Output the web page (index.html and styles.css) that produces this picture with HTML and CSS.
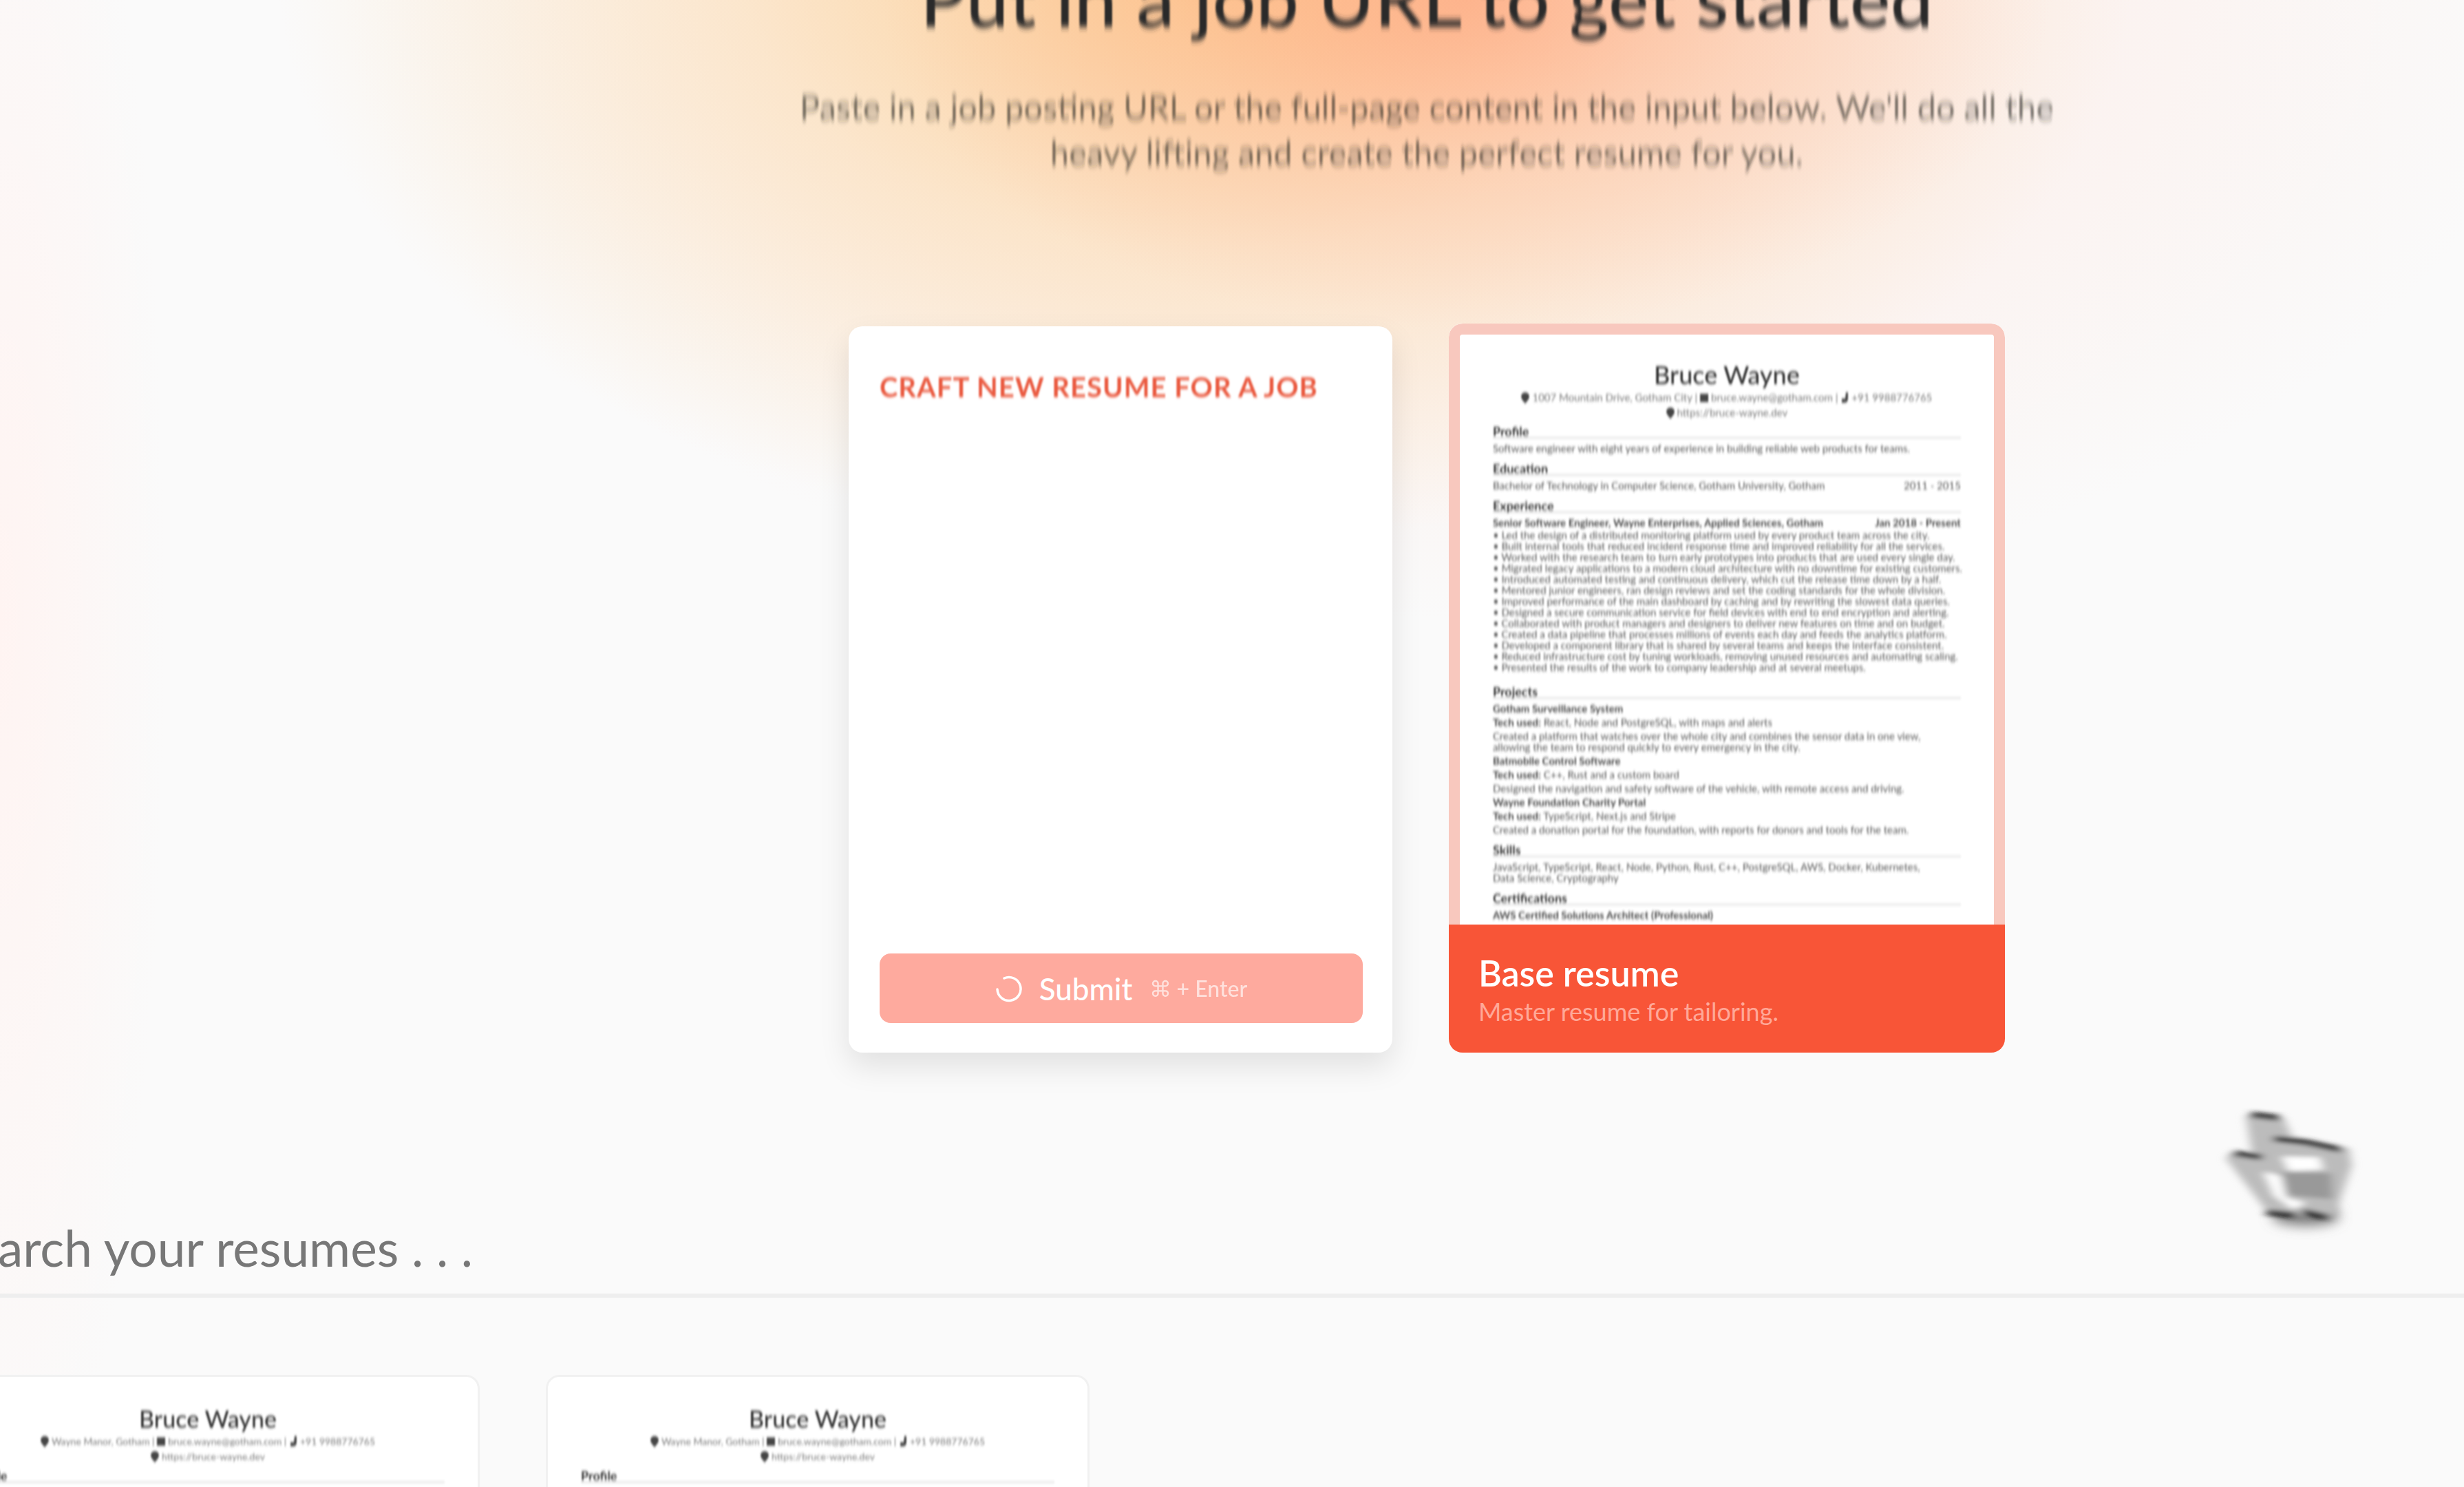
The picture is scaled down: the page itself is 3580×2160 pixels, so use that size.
FILE: index.html
```html
<!DOCTYPE html>
<html lang="en">
<head>
<meta charset="utf-8">
<title>Resumes</title>
<link rel="stylesheet" href="styles.css">
</head>
<body>
<svg class="defs" width="0" height="0" aria-hidden="true">
  <filter id="soft-tall" x="-5%" y="-20%" width="110%" height="140%"><feGaussianBlur stdDeviation="1 5"/></filter>
  <filter id="soft" x="-5%" y="-20%" width="110%" height="140%"><feGaussianBlur stdDeviation="1 2"/></filter>
  <symbol id="pin" viewBox="0 0 12 16"><path d="M6 0a6 6 0 0 0-6 6c0 4 6 10 6 10s6-6 6-10a6 6 0 0 0-6-6z"/></symbol>
  <symbol id="mail" viewBox="0 0 12 16"><path d="M0 2h12v12H0z"/></symbol>
  <symbol id="phone" viewBox="0 0 12 16"><path d="M8 0h3v9q0 6-6 6H2V9h5z"/></symbol>
</svg>
<div class="page">
  <header class="hero">
    <h1>Put in a job URL to get started</h1>
    <p>Paste in a job posting URL or the full-page content in the input below. We'll do all the<br>heavy lifting and create the perfect resume for you.</p>
  </header>
  <main>
    <section class="start">
      <form class="card craft">
        <label for="job">Craft new resume for a job</label>
        <textarea id="job"></textarea>
        <button type="button">
          <svg class="spinner" viewBox="0 0 40 40" aria-hidden="true"><path d="M13 5a17 17 0 1 1-10 16" fill="none" stroke="currentColor" stroke-width="3.5" stroke-linecap="round"/></svg>
          <span>Submit</span><small>⌘ + Enter</small>
        </button>
      </form>
      <article class="card base">
        <div class="doc framed">
          <h2>Bruce Wayne</h2>
          <p class="contact"><svg><use href="#pin"/></svg>1007 Mountain Drive, Gotham City | <svg><use href="#mail"/></svg>bruce.wayne@gotham.com | <svg><use href="#phone"/></svg>+91 9988776765<br><svg><use href="#pin"/></svg>https://bruce-wayne.dev</p>
          <h3>Profile</h3>
          <p>Software engineer with eight years of experience in building reliable web products for teams.</p>
          <h3>Education</h3>
          <p class="split"><span>Bachelor of Technology in Computer Science, Gotham University, Gotham</span><span>2011 - 2015</span></p>
          <h3>Experience</h3>
          <p class="split"><b>Senior Software Engineer, Wayne Enterprises, Applied Sciences, Gotham</b><b>Jan 2018 - Present</b></p>
          <p class="points">• Led the design of a distributed monitoring platform used by every product team across the city.<br>• Built internal tools that reduced incident response time and improved reliability for all the services.<br>• Worked with the research team to turn early prototypes into products that are used every single day.<br>• Migrated legacy applications to a modern cloud architecture with no downtime for existing customers.<br>• Introduced automated testing and continuous delivery, which cut the release time down by a half.<br>• Mentored junior engineers, ran design reviews and set the coding standards for the whole division.<br>• Improved performance of the main dashboard by caching and by rewriting the slowest data queries.<br>• Designed a secure communication service for field devices with end to end encryption and alerting.<br>• Collaborated with product managers and designers to deliver new features on time and on budget.<br>• Created a data pipeline that processes millions of events each day and feeds the analytics platform.<br>• Developed a component library that is shared by several teams and keeps the interface consistent.<br>• Reduced infrastructure cost by tuning workloads, removing unused resources and automating scaling.<br>• Presented the results of the work to company leadership and at several meetups.</p>
          <h3>Projects</h3>
          <p class="item"><b>Gotham Surveillance System</b></p>
          <p class="item"><b>Tech used:</b> React, Node and PostgreSQL, with maps and alerts</p>
          <p class="item">Created a platform that watches over the whole city and combines the sensor data in one view,<br>allowing the team to respond quickly to every emergency in the city.</p>
          <p class="item"><b>Batmobile Control Software</b></p>
          <p class="item"><b>Tech used:</b> C++, Rust and a custom board</p>
          <p class="item">Designed the navigation and safety software of the vehicle, with remote access and driving.</p>
          <p class="item"><b>Wayne Foundation Charity Portal</b></p>
          <p class="item"><b>Tech used:</b> TypeScript, Next.js and Stripe</p>
          <p class="item">Created a donation portal for the foundation, with reports for donors and tools for the team.</p>
          <h3>Skills</h3>
          <p>JavaScript, TypeScript, React, Node, Python, Rust, C++, PostgreSQL, AWS, Docker, Kubernetes,<br>Data Science, Cryptography</p>
          <h3>Certifications</h3>
          <p><b>AWS Certified Solutions Architect (Professional)</b></p>
        </div>
        <footer>
          <strong>Base resume</strong>
          <span>Master resume for tailoring.</span>
        </footer>
      </article>
    </section>
    <input class="search" type="search" aria-label="Search your resumes" placeholder="Search your resumes . . .">
    <section class="list">
      <article class="card doc">
        <h2>Bruce Wayne</h2>
        <p class="contact"><svg><use href="#pin"/></svg>Wayne Manor, Gotham | <svg><use href="#mail"/></svg>bruce.wayne@gotham.com | <svg><use href="#phone"/></svg>+91 9988776765<br><svg><use href="#pin"/></svg>https://bruce-wayne.dev</p>
        <h3>Profile</h3>
      </article>
      <article class="card doc">
        <h2>Bruce Wayne</h2>
        <p class="contact"><svg><use href="#pin"/></svg>Wayne Manor, Gotham | <svg><use href="#mail"/></svg>bruce.wayne@gotham.com | <svg><use href="#phone"/></svg>+91 9988776765<br><svg><use href="#pin"/></svg>https://bruce-wayne.dev</p>
        <h3>Profile</h3>
      </article>
    </section>
  </main>
</div>
<svg class="pointer" viewBox="0 0 300 240" aria-hidden="true">
  <defs>
    <filter id="haze"><feGaussianBlur stdDeviation="7 3"/></filter>
    <filter id="shade" x="-50%" y="-100%" width="200%" height="300%"><feGaussianBlur stdDeviation="9"/></filter>
  </defs>
  <ellipse cx="170" cy="186" rx="50" ry="14" fill="#777" filter="url(#shade)"/>
  <g filter="url(#haze)">
    <path d="M83 40l55 4 12 27 83 17 4 25-25 74-95-3-62-80 5-10 32 3z" fill="#bcbcbc"/>
    <path d="M135 100l55 1 5 18-50 2z" fill="#fff"/>
    <path d="M108 122l26 6 8 32 28 7-18 10-28-20z" fill="#fff"/>
    <path d="M135 122l72 2 2 38-66-6z" fill="#999"/>
    <path d="M90 39l42 5M124 74l45 5 52 11M66 95l40 6M113 181l42 4M166 180l36 8" fill="none" stroke="#111" stroke-width="8"/>
  </g>
</svg>
</body>
</html>
```
FILE: styles.css
```css
* { box-sizing: border-box; }
body {
  margin: 0;
  height: 100vh;
  overflow: hidden;
  position: relative;
  font-family: Lato, "Open Sans", sans-serif;
  background:
    radial-gradient(ellipse 850px 480px at 2130px 0, rgba(255, 140, 105, .45), rgba(255, 155, 125, .2) 50%, transparent),
    radial-gradient(ellipse 1350px 850px at 1750px -60px, rgba(252, 196, 120, .75), rgba(252, 214, 160, .45) 50%, transparent),
    radial-gradient(ellipse 1600px 900px at 2100px 0, rgba(255, 205, 190, .6), rgba(255, 222, 212, .32) 50%, transparent),
    radial-gradient(ellipse 240px 1400px at 0 900px, #fff4f2, transparent),
    #fafafa;
}
h1, h2, h3, p { margin: 0; }
.defs { position: absolute; }

/* the page is wider than the window and panned to the right */
.page { width: 121vw; margin-left: -93px; }

.hero {
  margin-top: -64px;
  text-align: center;
}
.hero h1 {
  font-size: 111px;
  line-height: 120px;
  font-weight: 500;
  color: #2b2b2b;
  filter: url(#soft-tall);
}
.hero p {
  margin-top: 66px;
  font-size: 49px;
  line-height: 66px;
  color: rgba(40, 36, 34, .6);
  filter: url(#soft-tall);
}

.card { width: 790px; border-radius: 20px; background: #fff; }
.start {
  display: flex;
  justify-content: center;
  gap: 82px;
  margin-top: 216px;
}
.craft {
  display: flex;
  flex-direction: column;
  margin-top: 4px;
  padding: 60px 43px 43px 45px;
  box-shadow: 0 20px 44px rgba(0, 0, 0, .1);
}
.craft label {
  font-size: 40px;
  line-height: 56px;
  font-weight: 700;
  letter-spacing: 1px;
  text-transform: uppercase;
  color: #ea5a41;
  filter: url(#soft);
}
.craft textarea {
  flex: 1;
  border: 0;
  outline: 0;
  resize: none;
  font: 36px Lato, sans-serif;
}
.craft button {
  display: flex;
  align-items: center;
  justify-content: center;
  gap: 24px;
  height: 101px;
  border: 0;
  border-radius: 16px;
  background: #feaa9e;
  color: #fff;
  font: 500 44px Lato, sans-serif;
}
.craft small { font-size: 32px; opacity: .65; }
.spinner { width: 40px; height: 40px; }

.base { width: 808px; overflow: hidden; }
.base footer {
  display: flex;
  flex-direction: column;
  padding: 40px 43px 34px;
  background: #f85537;
}
.base strong { font-size: 52px; line-height: 60px; font-weight: 600; color: #fff; }
.base span { line-height: 52px; }
.base footer span { font-size: 36px; color: #ffa898; }

.doc {
  padding: 36px 48px 6px;
  white-space: nowrap;
  font-size: 15px;
  line-height: 16px;
  color: #555;
}
.framed {
  border: 16px solid #f8c8be;
  border-bottom: 0;
  border-radius: 20px 20px 0 0;
}
.doc > * { filter: url(#soft); }
.doc h2 {
  font-size: 36px;
  line-height: 44px;
  font-weight: 500;
  text-align: center;
  color: #333;
}
.doc .contact { line-height: 22px; text-align: center; color: #777; }
.contact svg { width: 12px; height: 16px; margin-right: 4px; vertical-align: -3px; fill: #444; }
.doc h3 {
  margin: 9px 0 6px;
  border-bottom: 2px solid #ddd;
  font-size: 18px;
  line-height: 16px;
  color: #333;
}
.doc p + h3 { margin-top: 14px; }
.doc .contact + h3 { margin-top: 9px; }
.doc .split { display: flex; justify-content: space-between; }
.doc .split span { line-height: 16px; }
.doc b { color: #444; }
.doc .points { margin: 2px 0 20px; }
.doc .item + .item { margin-top: 4px; }

.search {
  display: block;
  width: 100%;
  margin-top: 216px;
  padding: 28px 12px;
  height: 140px;
  border: 0;
  border-bottom: 6px solid #eee;
  background: none;
  font: 73px Lato, sans-serif;
}
.search::placeholder { color: #777; opacity: 1; filter: url(#soft); }

.list { display: flex; gap: 96px; margin-top: 112px; }
.list .card { height: 1058px; padding-top: 39px; border: 3px solid #f1f1f1; font-size: 14px; }
.list h2 { font-size: 34px; }

.pointer {
  position: absolute;
  right: 100px;
  top: 1580px;
  width: 300px;
  height: 240px;
}
```
